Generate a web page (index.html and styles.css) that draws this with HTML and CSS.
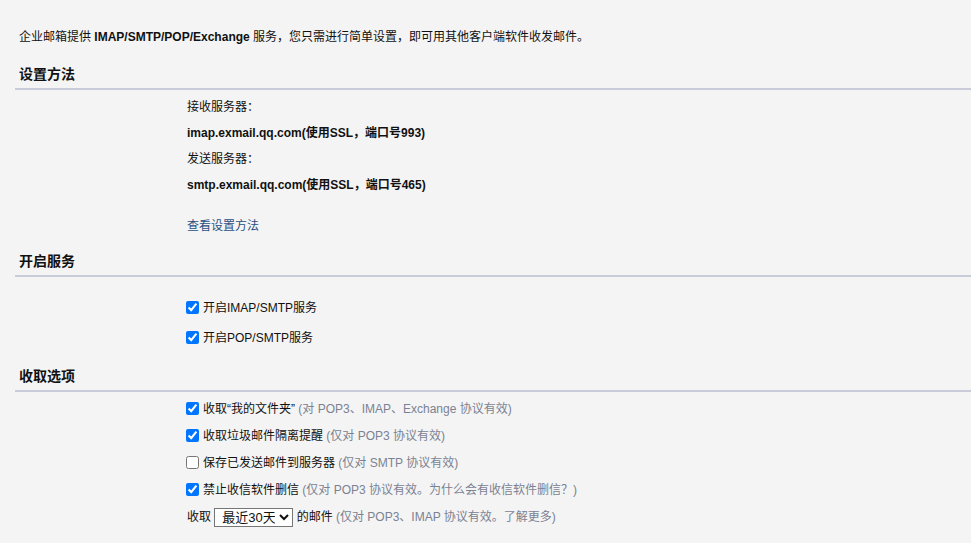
FILE: index.html
```html
<!DOCTYPE html>
<html lang="zh-CN">
  <head>
    <meta charset="UTF-8" />
    <meta name="viewport" content="width=device-width, initial-scale=1.0" />
    <title>客户端设置</title>
    <link rel="stylesheet" href="styles.css">
  </head>
  <body>
    <div class="page">
      <p class="intro">企业邮箱提供 <b>IMAP/SMTP/POP/Exchange</b> 服务，您只需进行简单设置，即可用其他客户端软件收发邮件。</p>

      <h2 class="section-title">设置方法</h2>
      <div class="fields fields-setup">
        <div class="row">接收服务器：</div>
        <div class="row"><b>imap.exmail.qq.com(使用SSL，端口号993)</b></div>
        <div class="row">发送服务器：</div>
        <div class="row"><b>smtp.exmail.qq.com(使用SSL，端口号465)</b></div>
        <div class="row row-link"><a href="#">查看设置方法</a></div>
      </div>

      <h2 class="section-title">开启服务</h2>
      <div class="fields fields-service">
        <label class="row row-check"><input type="checkbox" checked />开启IMAP/SMTP服务</label>
        <label class="row row-check"><input type="checkbox" checked />开启POP/SMTP服务</label>
      </div>

      <h2 class="section-title">收取选项</h2>
      <div class="fields fields-options">
        <label class="row row-opt"><input type="checkbox" checked />收取“我的文件夹” <span class="hint">(对 POP3、IMAP、Exchange 协议有效)</span></label>
        <label class="row row-opt"><input type="checkbox" checked />收取垃圾邮件隔离提醒 <span class="hint">(仅对 POP3 协议有效)</span></label>
        <label class="row row-opt"><input type="checkbox" />保存已发送邮件到服务器 <span class="hint">(仅对 SMTP 协议有效)</span></label>
        <label class="row row-opt"><input type="checkbox" checked />禁止收信软件删信 <span class="hint">(仅对 POP3 协议有效。为什么会有收信软件删信？)</span></label>
        <div class="row row-opt">收取 <select class="range">
            <option>最近30天</option>
            <option>全部</option>
          </select> 的邮件 <span class="hint">(仅对 POP3、IMAP 协议有效。了解更多)</span></div>
      </div>
    </div>
  </body>
</html>
```

FILE: styles.css
```css
* {
  margin: 0;
  padding: 0;
  box-sizing: border-box;
}
html,
body {
  width: 100%;
  height: 100%;
  overflow: hidden;
}
body {
  background: #f4f4f4;
  color: #111;
  font-family: "Liberation Sans", "Noto Sans CJK SC", sans-serif;
  font-size: 12px;
}
.page {
  padding: 27px 0 0 15px;
}
.intro {
  line-height: 20px;
  padding-left: 4px;
  margin-bottom: 17px;
}
.section-title {
  font-size: 14px;
  font-weight: bold;
  line-height: 20px;
  padding: 0 0 4px 4px;
  border-bottom: 2px solid #c9ccd8;
}
.fields {
  padding-left: 172px;
}
.fields-setup {
  padding-top: 4px;
  margin-bottom: 12px;
}
.fields-service {
  padding-top: 16px;
  margin-bottom: 13px;
}
.fields-options {
  padding-top: 4px;
}
.row {
  display: block;
  height: 26px;
  line-height: 26px;
  white-space: nowrap;
}
.row-link {
  margin-top: 15px;
}
.row-link a {
  color: #2b4f82;
  text-decoration: none;
}
.row-check {
  height: 30px;
  line-height: 30px;
}
.row-opt {
  height: 27px;
  line-height: 27px;
}
.row input[type="checkbox"] {
  width: 13px;
  height: 13px;
  margin: 0 4px 0 -1px;
  vertical-align: -2px;
}
.hint {
  color: #7b8292;
}
.range {
  width: 79px;
  height: 19px;
  padding: 0 1px 0 3px;
  vertical-align: middle;
  font-family: "Liberation Sans", "Noto Sans CJK SC", sans-serif;
  font-size: 13px;
  color: #111;
  background: #fff;
  border: 1px solid #767676;
  border-radius: 0;
}
```
